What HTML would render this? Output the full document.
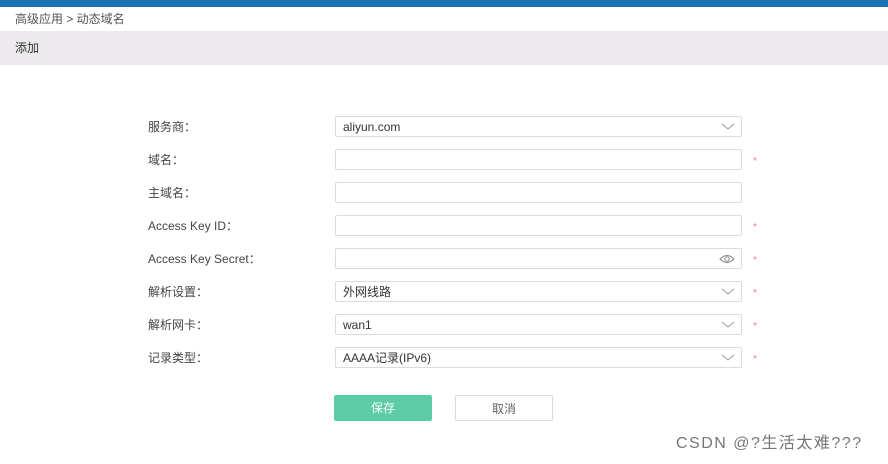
<!DOCTYPE html>
<html><head><meta charset="utf-8"><style>
body{margin:0;width:888px;height:464px;background:#fff;position:relative;overflow:hidden;font-family:"Liberation Sans","Noto Sans CJK SC",sans-serif;color:#333;font-size:12px}
.top{position:absolute;left:0;top:0;width:888px;height:7px;background:#1a73b2}
.bc{position:absolute;left:15px;top:11px;font-size:12px;color:#555;line-height:16px}
.band{position:absolute;left:0;top:31px;width:888px;height:34px;background:#edeaed}
.band span{position:absolute;left:15px;top:9px;font-size:12px;color:#333;line-height:16px}
.lbl{position:absolute;left:148px;font-size:12px;color:#444;line-height:16px}
.inp{position:absolute;left:335px;width:407px;height:21px;border:1px solid #dcdcdc;border-radius:2px;box-sizing:border-box;background:#fff}
.inp span{position:absolute;left:7px;top:2px;font-size:12px;color:#333;line-height:16px}
.arr{position:absolute;right:6px;top:4px}
.st{position:absolute;left:753px;color:#f08080;font-size:10px;line-height:12px}
.btn{position:absolute;top:395px;height:26px;width:98px;border-radius:2px;box-sizing:border-box;text-align:center;line-height:26px;font-size:12px}
</style></head><body>
<div class="top"></div>
<div class="bc">高级应用 &gt; 动态域名</div>
<div class="band"><span>添加</span></div>

<div class="lbl" style="top:119px">服务商：</div>
<div class="inp" style="top:116px"><span>aliyun.com</span><svg class="arr" width="14" height="10"><path d="M1 3l6 5 6-5" fill="none" stroke="#999" stroke-width="1"/></svg></div>

<div class="lbl" style="top:152px">域名：</div>
<div class="inp" style="top:149px"></div><div class="st" style="top:156px">*</div>

<div class="lbl" style="top:185px">主域名：</div>
<div class="inp" style="top:182px"></div>

<div class="lbl" style="top:218px">Access Key ID：</div>
<div class="inp" style="top:215px"></div><div class="st" style="top:222px">*</div>

<div class="lbl" style="top:251px">Access Key Secret：</div>
<div class="inp" style="top:248px"><svg class="arr" style="top:4px" width="16" height="12"><path d="M1 6Q8 -1 15 6Q8 13 1 6Z" fill="none" stroke="#888"/><circle cx="8" cy="6" r="2.2" fill="none" stroke="#888"/></svg></div><div class="st" style="top:255px">*</div>

<div class="lbl" style="top:284px">解析设置：</div>
<div class="inp" style="top:281px"><span>外网线路</span><svg class="arr" width="14" height="10"><path d="M1 3l6 5 6-5" fill="none" stroke="#999"/></svg></div><div class="st" style="top:288px">*</div>

<div class="lbl" style="top:317px">解析网卡：</div>
<div class="inp" style="top:314px"><span>wan1</span><svg class="arr" width="14" height="10"><path d="M1 3l6 5 6-5" fill="none" stroke="#999"/></svg></div><div class="st" style="top:321px">*</div>

<div class="lbl" style="top:350px">记录类型：</div>
<div class="inp" style="top:347px"><span>AAAA记录(IPv6)</span><svg class="arr" width="14" height="10"><path d="M1 3l6 5 6-5" fill="none" stroke="#999"/></svg></div><div class="st" style="top:354px">*</div>

<div class="btn" style="left:334px;background:#5bcca5;color:#fff">保存</div>
<div class="btn" style="left:455px;border:1px solid #ddd;color:#666">取消</div>
<div style="position:absolute;left:676px;top:434px;font-size:16px;line-height:20px;letter-spacing:1.5px;color:#777">CSDN @?生活太难???</div>
</body></html>
